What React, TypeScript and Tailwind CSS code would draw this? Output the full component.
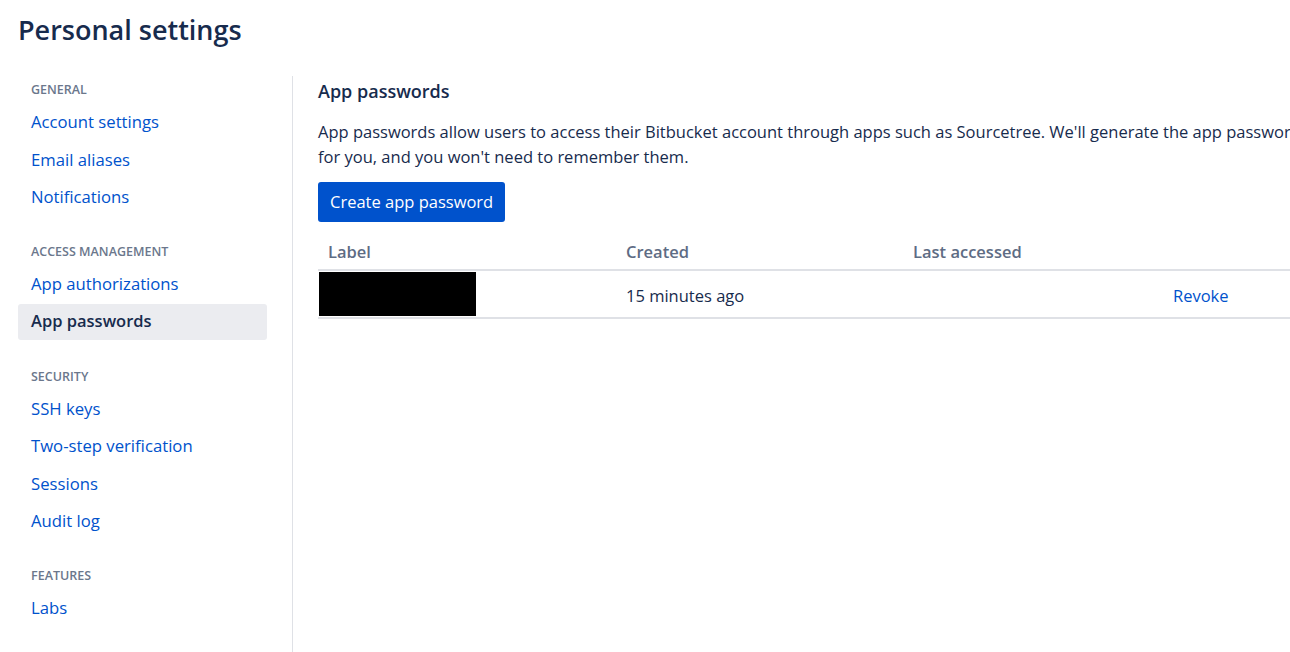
import React from "react"

type NavGroup = {
  title: string
  items: string[]
}

const groups: NavGroup[] = [
  { title: "GENERAL", items: ["Account settings", "Email aliases", "Notifications"] },
  { title: "ACCESS MANAGEMENT", items: ["App authorizations", "App passwords"] },
  { title: "SECURITY", items: ["SSH keys", "Two-step verification", "Sessions", "Audit log"] },
  { title: "FEATURES", items: ["Labs"] },
]

const active = "App passwords"

function Sidebar() {
  return (
    <nav className="w-[249px] ml-[18px] pt-[4px] flex flex-col gap-[27px] shrink-0">
      {groups.map((group) => (
        <div key={group.title} className="flex flex-col">
          <div className="h-5 leading-5 px-[13px] text-[12.5px] font-semibold text-[#6b778c] mb-1">
            {group.title}
          </div>
          <div className="flex flex-col gap-[1.5px]">
            {group.items.map((item) =>
              item === active ? (
                <div
                  key={item}
                  className="h-9 flex items-center px-[13px] rounded-[3px] bg-[#ebecf0] text-[#172b4d] text-[16.5px] font-semibold"
                >
                  {item}
                </div>
              ) : (
                <a
                  key={item}
                  href="#"
                  className="h-9 flex items-center px-[13px] text-[16.7px] text-[#0052cc]"
                >
                  {item}
                </a>
              )
            )}
          </div>
        </div>
      ))}
    </nav>
  )
}

function AppPasswords() {
  return (
    <main className="flex-1 min-w-[1100px] pl-[25px]">
      <h2 className="h-7 leading-7 mt-[1px] text-[18px] font-semibold text-[#172b4d]">App passwords</h2>
      <p className="mt-[14px] w-[1000px] text-[16.5px] leading-[25px] text-[#172b4d]">
        App passwords allow users to access their Bitbucket account through apps such as Sourcetree. We'll generate the app passwords
        for you, and you won't need to remember them.
      </p>
      <button className="mt-[13px] h-10 px-3 rounded-[3px] bg-[#0052cc] text-white text-[16.5px]">
        Create app password
      </button>
      <table className="mt-[10px] w-[1100px] border-collapse text-[16.5px]">
        <thead>
          <tr className="border-b-2 border-[#dfe1e6]">
            <th className="w-[298px] h-[38px] pt-[4px] pl-[10px] text-left font-semibold text-[#5e6c84]">Label</th>
            <th className="w-[287px] pt-[4px] pl-[10px] text-left font-semibold text-[#5e6c84]">Created</th>
            <th className="w-[260px] pt-[4px] pl-[10px] text-left font-semibold text-[#5e6c84]">Last accessed</th>
            <th className="pl-[10px]"></th>
          </tr>
        </thead>
        <tbody>
          <tr className="border-b-2 border-[#dfe1e6]">
            <td className="h-[46px] pl-[1px] py-[1px]">
              <div className="w-[157px] h-[44px] bg-black" />
            </td>
            <td className="pl-[10px] pt-[4px] text-[#172b4d]">15 minutes ago</td>
            <td className="pl-[10px]"></td>
            <td className="pl-[10px] pt-[4px]">
              <a href="#" className="text-[#0052cc]">Revoke</a>
            </td>
          </tr>
        </tbody>
      </table>
    </main>
  )
}

export default function App() {
  return (
    <div
      className="w-[1290px] h-[652px] overflow-hidden bg-white"
      style={{ fontFamily: '"Open Sans", "Noto Sans", sans-serif' }}
    >
      <h1 className="pt-[13px] pl-[18px] h-[76px] text-[27px] leading-[34px] font-semibold text-[#172b4d]">
        Personal settings
      </h1>
      <div className="flex">
        <Sidebar />
        <div className="w-px ml-[25px] h-[600px] bg-[#dfe1e6] shrink-0" />
        <AppPasswords />
      </div>
    </div>
  )
}
